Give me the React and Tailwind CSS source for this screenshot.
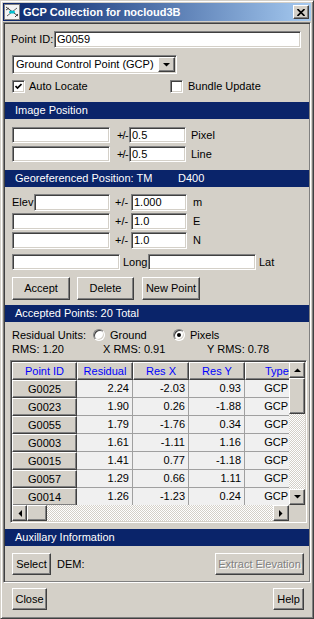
const sunken =
  'bg-white border border-t-[#808080] border-l-[#808080] border-b-white border-r-white shadow-[inset_1px_1px_0_#404040,inset_-1px_-1px_0_#d4d0c8]'
const raised =
  'bg-[#d4d0c8] border border-t-white border-l-white border-b-[#404040] border-r-[#404040] shadow-[inset_-1px_-1px_0_#808080]'
const dither = 'bg-[image:repeating-conic-gradient(#ffffff_0_25%,#d4d0c8_0_50%)] bg-[length:2px_2px]'

function Field({ w, h = 'h-[17px]', value = '' }) {
  return <div className={`${sunken} ${w} ${h} flex items-center pl-[2px] shrink-0 overflow-hidden`}>{value}</div>
}

function Button({ w, h = 'h-[23px]', children, disabled }) {
  return (
    <div
      className={`${raised} ${w} ${h} flex items-center justify-center shrink-0 ${
        disabled ? 'text-[#808080] [text-shadow:1px_1px_0_#ffffff]' : ''
      }`}
    >
      {children}
    </div>
  )
}

function Header({ children }) {
  return <div className="h-[17px] bg-[#0a246a] text-white flex items-center pl-[10px] shrink-0">{children}</div>
}

function Checkbox({ checked }) {
  return (
    <div className={`${sunken} w-[13px] h-[13px] flex items-center justify-center shrink-0`}>
      {checked && (
        <svg width="7" height="7" viewBox="0 0 7 7">
          <polyline points="0.5,3 2.5,5 6.5,1" fill="none" stroke="#000" strokeWidth="1.7" />
        </svg>
      )}
    </div>
  )
}

function Radio({ checked }) {
  return (
    <div className="w-[12px] h-[12px] rounded-full border border-t-[#808080] border-l-[#808080] border-b-white border-r-white bg-white shadow-[inset_1px_1px_0_#404040,inset_-1px_-1px_0_#d4d0c8] flex items-center justify-center shrink-0">
      {checked && <div className="w-[4px] h-[4px] rounded-full bg-black" />}
    </div>
  )
}

function Arrow({ dir }) {
  const pts = {
    up: '0,4 7,4 3.5,0.5',
    down: '0,0 7,0 3.5,3.5',
    left: '4,0 4,7 0.5,3.5',
    right: '0,0 0,7 3.5,3.5',
  }[dir]
  const vertical = dir === 'up' || dir === 'down'
  return (
    <svg width={vertical ? 7 : 4} height={vertical ? 4 : 7} viewBox={vertical ? '0 0 7 4' : '0 0 4 7'}>
      <polygon points={pts} fill="#000" />
    </svg>
  )
}

const rows = [
  ['G0025', '2.24', '-2.03', '0.93'],
  ['G0023', '1.90', '0.26', '-1.88'],
  ['G0055', '1.79', '-1.76', '0.34'],
  ['G0003', '1.61', '-1.11', '1.16'],
  ['G0015', '1.41', '0.77', '-1.18'],
  ['G0057', '1.29', '0.66', '1.11'],
  ['G0014', '1.26', '-1.23', '0.24'],
]

function App() {
  return (
    <div className="w-[314px] h-[619px] bg-[#d4d0c8] font-['Liberation_Sans',Arial,sans-serif] text-[11px] leading-none text-black border border-t-[#d4d0c8] border-l-[#d4d0c8] border-b-[#404040] border-r-[#404040] shadow-[inset_1px_1px_0_#ffffff,inset_-1px_-1px_0_#808080] p-[2px] flex flex-col overflow-hidden whitespace-nowrap">
      {/* Title bar */}
      <div className="h-[18px] bg-gradient-to-r from-[#0a246a] to-[#a6caf0] flex items-center shrink-0">
        <svg width="16" height="16" viewBox="0 0 16 16" className="ml-[1px] shrink-0">
          <rect x="0.5" y="0.5" width="15" height="15" fill="#f4f4f4" stroke="#808080" />
          <line x1="2" y1="3" x2="14" y2="12" stroke="#404040" strokeWidth="1" />
          <line x1="3" y1="12" x2="13" y2="4" stroke="#606060" strokeWidth="1" />
          <line x1="2" y1="6" x2="5" y2="4" stroke="#404040" strokeWidth="1" />
          <line x1="11" y1="13" x2="14" y2="10" stroke="#404040" strokeWidth="1" />
          <ellipse cx="8" cy="8" rx="3" ry="1.6" fill="#00c0d0" />
        </svg>
        <span className="ml-[3px] text-white font-bold text-[11px]">GCP Collection for nocloud3B</span>
        <div className={`${raised} w-[16px] h-[14px] ml-auto mr-[2px] flex items-center justify-center`}>
          <svg width="8" height="7" viewBox="0 0 8 7">
            <path d="M0.5 0 L7.5 7 M7.5 0 L0.5 7" stroke="#000" strokeWidth="1.6" />
          </svg>
        </div>
      </div>

      {/* Main panel */}
      <div className="mt-[1px] h-[561px] shrink-0 border border-t-[#808080] border-l-[#808080] border-b-white border-r-white shadow-[inset_1px_1px_0_#404040,inset_-1px_-1px_0_#808080] p-[1px] flex flex-col">
        {/* Point ID */}
        <div className="mt-[7px] h-[17px] flex items-center pl-[6px]">
          <span className="w-[43px] shrink-0">Point ID:</span>
          <Field w="w-[247px]" value="G0059" />
        </div>

        {/* Type dropdown */}
        <div className={`${sunken} mt-[7px] ml-[7px] w-[165px] h-[19px] flex items-center justify-between pl-[3px] pr-[1px]`}>
          <span>Ground Control Point (GCP)</span>
          <div className={`${raised} w-[17px] h-[15px] flex items-center justify-center`}>
            <Arrow dir="down" />
          </div>
        </div>

        {/* Checkboxes */}
        <div className="mt-[6px] h-[13px] flex items-center pl-[7px]">
          <div className="w-[158px] flex items-center shrink-0">
            <Checkbox checked />
            <span className="ml-[4px]">Auto Locate</span>
          </div>
          <Checkbox />
          <span className="ml-[5px]">Bundle Update</span>
        </div>

        {/* Image position */}
        <div className="mt-[9px]">
          <Header>Image Position</Header>
        </div>
        <div className="mt-[8px] h-[16px] flex items-center pl-[7px]">
          <Field w="w-[98px]" h="h-[16px]" />
          <span className="ml-[7px] w-[12px] tracking-[-0.8px] shrink-0">+/-</span>
          <Field w="w-[57px]" h="h-[16px]" value="0.5" />
          <span className="ml-[5px]">Pixel</span>
        </div>
        <div className="mt-[3px] h-[16px] flex items-center pl-[7px]">
          <Field w="w-[98px]" h="h-[16px]" />
          <span className="ml-[7px] w-[12px] tracking-[-0.8px] shrink-0">+/-</span>
          <Field w="w-[57px]" h="h-[16px]" value="0.5" />
          <span className="ml-[5px]">Line</span>
        </div>

        {/* Georeferenced position */}
        <div className="mt-[8px]">
          <Header>
            <span className="w-[163px] shrink-0">Georeferenced Position: TM</span>
            <span>D400</span>
          </Header>
        </div>
        <div className="mt-[7px] h-[17px] flex items-center pl-[7px]">
          <span className="w-[22px] shrink-0">Elev</span>
          <Field w="w-[76px]" />
          <span className="ml-[5px] w-[16px] shrink-0">+/-</span>
          <Field w="w-[56px]" value="1.000" />
          <span className="ml-[6px]">m</span>
        </div>
        <div className="mt-[2px] h-[17px] flex items-center pl-[7px]">
          <Field w="w-[98px]" />
          <span className="ml-[5px] w-[16px] shrink-0">+/-</span>
          <Field w="w-[56px]" value="1.0" />
          <span className="ml-[6px]">E</span>
        </div>
        <div className="mt-[2px] h-[17px] flex items-center pl-[7px]">
          <Field w="w-[98px]" />
          <span className="ml-[5px] w-[16px] shrink-0">+/-</span>
          <Field w="w-[56px]" value="1.0" />
          <span className="ml-[6px]">N</span>
        </div>
        <div className="mt-[5px] h-[16px] flex items-center pl-[7px]">
          <Field w="w-[108px]" h="h-[16px]" />
          <span className="ml-[3px] w-[25px] shrink-0">Long</span>
          <Field w="w-[108px]" h="h-[16px]" />
          <span className="ml-[3px]">Lat</span>
        </div>

        {/* Actions */}
        <div className="mt-[7px] flex items-center pl-[7px]">
          <Button w="w-[58px]">Accept</Button>
          <div className="ml-[7px]">
            <Button w="w-[57px]">Delete</Button>
          </div>
          <div className="ml-[8px]">
            <Button w="w-[58px]">New Point</Button>
          </div>
        </div>

        {/* Accepted points */}
        <div className="mt-[5px]">
          <Header>Accepted Points: 20 Total</Header>
        </div>
        <div className="mt-[6px] h-[14px] flex items-center pl-[7px]">
          <span className="w-[81px] shrink-0">Residual Units:</span>
          <Radio />
          <span className="ml-[5px] w-[63px] shrink-0">Ground</span>
          <Radio checked />
          <span className="ml-[5px]">Pixels</span>
        </div>
        <div className="h-[14px] flex items-center pl-[7px]">
          <span className="w-[91px] shrink-0">RMS: 1.20</span>
          <span className="w-[104px] shrink-0">X RMS: 0.91</span>
          <span>Y RMS: 0.78</span>
        </div>

        {/* Table */}
        <div className="mt-[4px] ml-[5px] w-[297px] h-[163px] border border-t-[#808080] border-l-[#808080] border-b-white border-r-white shadow-[inset_1px_1px_0_#404040,inset_-1px_-1px_0_#d4d0c8] p-[1px] flex flex-col">
          <div className="h-[143px] flex">
            <div className="w-[277px] h-[143px] overflow-hidden flex flex-col bg-[#d4d0c8]">
              <div className="h-[18px] flex shrink-0 text-[#0000ff]">
                <div className={`${raised} w-[65px] h-[18px] flex items-center justify-center shrink-0`}>Point ID</div>
                <div className={`${raised} w-[56px] h-[18px] flex items-center justify-center shrink-0`}>Residual</div>
                <div className={`${raised} w-[56px] h-[18px] flex items-center justify-center shrink-0`}>Res X</div>
                <div className={`${raised} w-[56px] h-[18px] flex items-center justify-center shrink-0`}>Res Y</div>
                <div className={`${raised} w-[60px] h-[18px] flex items-center pl-[19px] shrink-0`}>Type</div>
              </div>
              {rows.map((r) => (
                <div key={r[0]} className="h-[18px] flex shrink-0">
                  <div className={`${raised} w-[65px] h-[18px] flex items-center justify-center shrink-0`}>{r[0]}</div>
                  {r.slice(1).map((v, i) => (
                    <div
                      key={i}
                      className="w-[56px] h-[18px] bg-[#f0f0f0] border-r border-b border-[#a0a0a0] flex items-center justify-end pr-[3px] shrink-0"
                    >
                      {v}
                    </div>
                  ))}
                  <div className="w-[44px] h-[18px] bg-[#f0f0f0] border-b border-[#a0a0a0] flex items-center justify-end pr-[1px] shrink-0">
                    GCP
                  </div>
                </div>
              ))}
            </div>
            {/* Vertical scrollbar */}
            <div className="w-[16px] h-[143px] flex flex-col shrink-0">
              <div className={`${raised} h-[16px] flex items-center justify-center shrink-0`}>
                <Arrow dir="up" />
              </div>
              <div className={`${raised} h-[36px] shrink-0`} />
              <div className={`flex-1 ${dither}`} />
              <div className={`${raised} h-[16px] flex items-center justify-center shrink-0`}>
                <Arrow dir="down" />
              </div>
            </div>
          </div>
          {/* Horizontal scrollbar */}
          <div className="h-[16px] flex shrink-0">
            <div className="w-[277px] flex">
              <div className={`${raised} w-[15px] h-[16px] flex items-center justify-center shrink-0`}>
                <Arrow dir="left" />
              </div>
              <div className={`${raised} w-[20px] h-[16px] shrink-0`} />
              <div className={`flex-1 ${dither}`} />
              <div className={`${raised} w-[16px] h-[16px] flex items-center justify-center shrink-0`}>
                <Arrow dir="right" />
              </div>
            </div>
            <div className="w-[16px] bg-[#d4d0c8]" />
          </div>
        </div>

        {/* Auxillary */}
        <div className="mt-[6px]">
          <Header>Auxillary Information</Header>
        </div>
        <div className="mt-[7px] flex items-center pl-[7px] pr-[5px]">
          <Button w="w-[39px]" h="h-[22px]">Select</Button>
          <span className="ml-[6px]">DEM:</span>
          <div className="ml-auto">
            <Button w="w-[89px]" h="h-[22px]" disabled>
              Extract Elevation
            </Button>
          </div>
        </div>
      </div>

      {/* Bottom buttons */}
      <div className="mt-[5px] flex items-center pl-[9px] pr-[7px]">
        <Button w="w-[35px]" h="h-[22px]">Close</Button>
        <div className="ml-auto">
          <Button w="w-[31px]" h="h-[22px]">Help</Button>
        </div>
      </div>
    </div>
  )
}

export default App
